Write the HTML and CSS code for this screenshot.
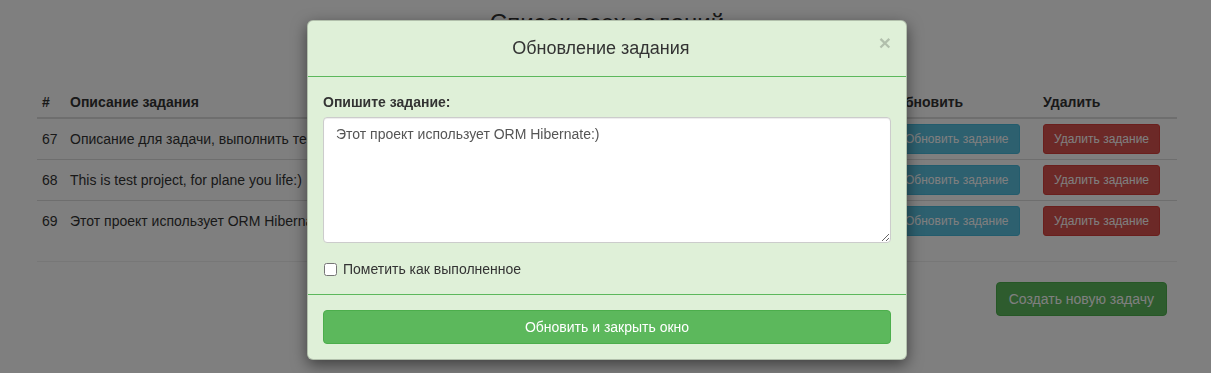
FILE: index.html
```html
<!DOCTYPE html>
<html lang="ru">
<head>
  <meta charset="UTF-8" />
  <title>Список всех заданий</title>
  <link rel="stylesheet" href="styles.css">
</head>
<body>
  <div class="container">
    <h2>Список всех заданий</h2>

    <table class="tasks">
      <thead>
        <tr>
          <th class="col-id">#</th>
          <th>Описание задания</th>
          <th class="col-upd">Обновить</th>
          <th class="col-del">Удалить</th>
        </tr>
      </thead>
      <tbody>
        <tr>
          <td>67</td>
          <td>Описание для задачи, выполнить тест</td>
          <td><button class="btn btn-sm btn-info">Обновить задание</button></td>
          <td><button class="btn btn-sm btn-danger">Удалить задание</button></td>
        </tr>
        <tr>
          <td>68</td>
          <td>This is test project, for plane you life:)</td>
          <td><button class="btn btn-sm btn-info">Обновить задание</button></td>
          <td><button class="btn btn-sm btn-danger">Удалить задание</button></td>
        </tr>
        <tr>
          <td>69</td>
          <td>Этот проект использует ORM Hibernate:)</td>
          <td><button class="btn btn-sm btn-info">Обновить задание</button></td>
          <td><button class="btn btn-sm btn-danger">Удалить задание</button></td>
        </tr>
      </tbody>
    </table>

    <hr>

    <div class="actions">
      <button class="btn btn-success">Создать новую задачу</button>
    </div>
  </div>

  <div class="backdrop"></div>

  <div class="modal">
    <div class="modal-header">
      <span class="close">&times;</span>
      <h4>Обновление задания</h4>
    </div>
    <div class="modal-body">
      <label for="desc">Опишите задание:</label>
      <textarea id="desc">Этот проект использует ORM Hibernate:)</textarea>
      <div class="checkbox">
        <label><input type="checkbox"> Пометить как выполненное</label>
      </div>
    </div>
    <div class="modal-footer">
      <button class="btn btn-success btn-block">Обновить и закрыть окно</button>
    </div>
  </div>
</body>
</html>
```

FILE: styles.css
```css
* {
  box-sizing: border-box;
}
body {
  margin: 0;
  font-family: "Liberation Sans", Arial, sans-serif;
  font-size: 14px;
  line-height: 20px;
  color: #333;
  background-color: #fff;
}
.container {
  width: 1143px;
  margin: 0 auto;
  padding-left: 3px;
}
h2 {
  margin: 5px 0 47px;
  font-size: 24px;
  font-weight: normal;
  line-height: 35px;
  text-align: center;
}
.tasks {
  width: 100%;
  border-collapse: collapse;
}
.tasks th, .tasks td {
  padding: 5px;
  text-align: left;
  vertical-align: middle;
}
.tasks th {
  font-weight: bold;
  border-bottom: 2px solid #ddd;
}
.tasks td {
  border-top: 1px solid #ddd;
}
.tasks tbody tr:first-child td {
  border-top: none;
}
.col-id {
  width: 28px;
}
.col-upd {
  width: 149px;
}
.col-del {
  width: 139px;
}
hr {
  margin: 20px 0;
  border: none;
  border-top: 1px solid #eee;
}
.actions {
  display: flex;
  justify-content: flex-end;
  padding-right: 10px;
}
.btn {
  display: inline-block;
  padding: 6px 12px;
  font-family: inherit;
  font-size: 14px;
  line-height: 20px;
  color: #fff;
  border: 1px solid transparent;
  border-radius: 4px;
  cursor: pointer;
}
.btn-sm {
  padding: 5px 10px;
  font-size: 12px;
  line-height: 18px;
  border-radius: 3px;
}
.btn-info {
  background-color: #5bc0de;
  border-color: #46b8da;
}
.btn-danger {
  background-color: #d9534f;
  border-color: #d43f3a;
}
.btn-success {
  background-color: #5cb85c;
  border-color: #4cae4c;
}
.btn-block {
  display: block;
  width: 100%;
}
.backdrop {
  position: fixed;
  inset: 0;
  background-color: rgba(0, 0, 0, 0.5);
}
.modal {
  position: absolute;
  top: 20px;
  left: 307px;
  width: 600px;
  background-color: #dff0d8;
  border: 1px solid rgba(0, 0, 0, 0.2);
  border-radius: 6px;
  box-shadow: 0 5px 15px rgba(0, 0, 0, 0.5);
}
.modal-header {
  padding: 15px;
  border-bottom: 1px solid #5cb85c;
}
.modal-header h4 {
  margin: 0;
  font-size: 18px;
  font-weight: normal;
  line-height: 25px;
  text-align: center;
}
.close {
  float: right;
  margin-top: -6px;
  font-size: 21px;
  font-weight: bold;
  line-height: 26px;
  color: #000;
  opacity: 0.2;
}
.modal-body {
  padding: 15px;
}
.modal-body > label {
  display: block;
  margin-bottom: 5px;
  font-weight: bold;
}
textarea {
  display: block;
  width: 100%;
  height: 126px;
  padding: 6px 12px;
  font-family: inherit;
  font-size: 14px;
  line-height: 20px;
  color: #555;
  background-color: #fff;
  border: 1px solid #ccc;
  border-radius: 4px;
  box-shadow: inset 0 1px 1px rgba(0, 0, 0, 0.075);
  resize: vertical;
}
.checkbox {
  margin-top: 16px;
}
.checkbox label {
  display: flex;
  align-items: center;
  gap: 6px;
}
.checkbox input {
  width: 13px;
  height: 13px;
  margin: 0 0 0 1px;
}
.modal-footer {
  padding: 15px;
  border-top: 1px solid #5cb85c;
}
```
